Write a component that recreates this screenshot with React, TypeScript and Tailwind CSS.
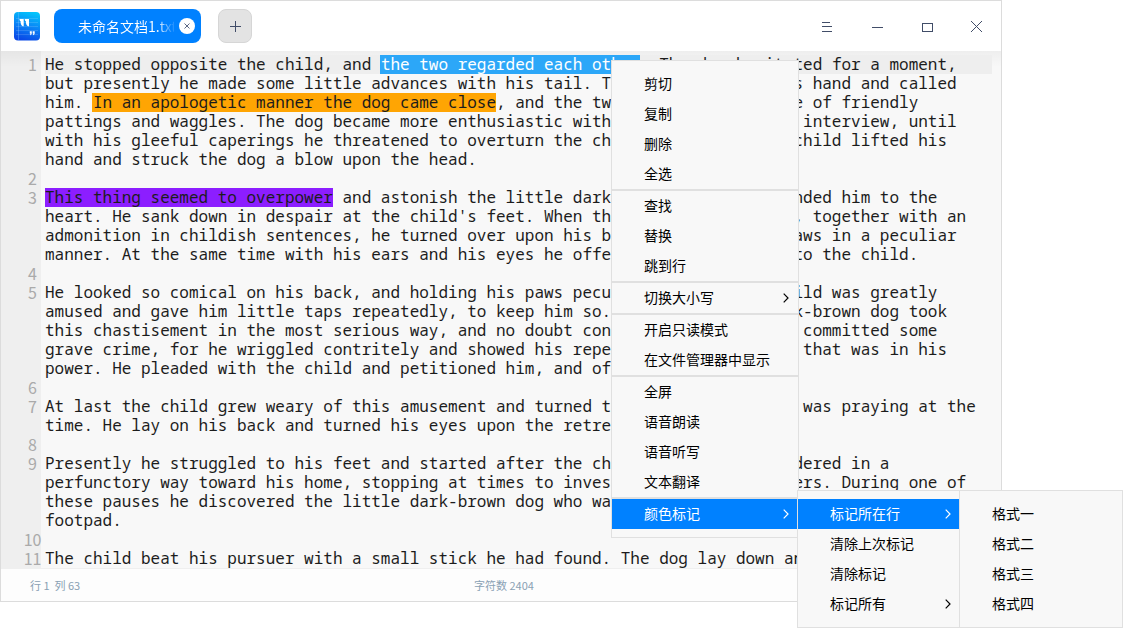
import React from "react";

type Mark = "selection" | "orange" | "purple";
type Segment = { text: string; mark?: Mark };
type Line = { no?: number; active?: boolean; segments: Segment[] };

const markClass: Record<Mark, string> = {
  selection: "-ml-px pl-px bg-[#2ca7f8] text-white",
  orange: "-ml-px pl-px bg-[#ffa503]",
  purple: "bg-[#8c1eff]",
};

const t = (text: string, no?: number): Line => ({ no, segments: [{ text }] });

const lines: Line[] = [
  {
    no: 1,
    active: true,
    segments: [
      { text: "He stopped opposite the child, and " },
      { text: "the two regarded each other", mark: "selection" },
      { text: ". The dog hesitated for a moment," },
    ],
  },
  t("but presently he made some little advances with his tail. The child put out his hand and called"),
  {
    segments: [
      { text: "him. " },
      { text: "In an apologetic manner the dog came close", mark: "orange" },
      { text: ", and the two had an interchange of friendly" },
    ],
  },
  t("pattings and waggles. The dog became more enthusiastic with each moment of the interview, until"),
  t("with his gleeful caperings he threatened to overturn the child. Whereupon the child lifted his"),
  t("hand and struck the dog a blow upon the head."),
  t("", 2),
  {
    no: 3,
    segments: [
      { text: "This thing seemed to overpower", mark: "purple" },
      { text: " and astonish the little dark-brown dog, and wounded him to the" },
    ],
  },
  t("heart. He sank down in despair at the child's feet. When the blow was repeated, together with an"),
  t("admonition in childish sentences, he turned over upon his back, and held his paws in a peculiar"),
  t("manner. At the same time with his ears and his eyes he offered a small prayer to the child."),
  t("", 4),
  t("He looked so comical on his back, and holding his paws peculiarly, that the child was greatly", 5),
  t("amused and gave him little taps repeatedly, to keep him so. But the little dark-brown dog took"),
  t("this chastisement in the most serious way, and no doubt considered that he had committed some"),
  t("grave crime, for he wriggled contritely and showed his repentance in every way that was in his"),
  t("power. He pleaded with the child and petitioned him, and offered more prayers."),
  t("", 6),
  t("At last the child grew weary of this amusement and turned toward home. The dog was praying at the", 7),
  t("time. He lay on his back and turned his eyes upon the retreating form."),
  t("", 8),
  t("Presently he struggled to his feet and started after the child. The latter wandered in a", 9),
  t("perfunctory way toward his home, stopping at times to investigate various matters. During one of"),
  t("these pauses he discovered the little dark-brown dog who was following him with the air of a"),
  t("footpad."),
  t("", 10),
  t("The child beat his pursuer with a small stick he had found. The dog lay down and prayed", 11),
];

function AppLogo() {
  return (
    <svg width="26" height="29" viewBox="0 0 26 29">
      <defs>
        <linearGradient id="logo" x1="0.65" y1="0" x2="0.4" y2="1">
          <stop offset="0" stopColor="#04c4fb" />
          <stop offset="0.5" stopColor="#0a84f6" />
          <stop offset="1" stopColor="#0a48e6" />
        </linearGradient>
      </defs>
      <rect width="26" height="28.500" rx="4" fill="url(#logo)" />
      <path d="M4.500 0V28.500" stroke="#7fc4ff" strokeOpacity="0.35" />
      <path d="M2 6.500H24M2 10.500H24M2 14.500H24M2 18.500H24M2 22.500H24" stroke="#fff" strokeOpacity="0.14" />
      <path d="M5.500 7h4.200v7.300C7 14.100 6.600 11.500 6.600 9.200C5.900 9 5.500 8.200 5.500 7zM10.700 7h4.300v7.300C12.300 14.100 11.900 11.500 11.900 9.200C11.200 9 10.700 8.200 10.700 7z" fill="#fff" />
      <path d="M15.800 19.300h2v1.700c0 1.200-.6 1.900-1.800 2.200l.5-1.700h-.7zM18.700 19.300h2v1.700c0 1.200-.6 1.900-1.800 2.200l.5-1.700h-.7z" fill="#fff" />
    </svg>
  );
}

function TitleBar() {
  return (
    <header className="flex h-[50px] shrink-0 items-start bg-white">
      <div className="ml-[13px] mt-[11px]">
        <AppLogo />
      </div>
      <div className="ml-[14px] mt-2 flex h-[34px] w-[147px] items-center rounded-lg bg-[#0081ff] pl-[24px]">
        <span className="w-[96px] shrink-0 overflow-hidden whitespace-nowrap bg-linear-to-r from-white from-82% to-white/15 to-98% bg-clip-text text-[14px] leading-5 text-transparent">
          未命名文档1.txt
        </span>
        <button className="ml-[5px] flex size-4 shrink-0 items-center justify-center rounded-full bg-white">
          <svg width="6" height="6" viewBox="0 0 6 6" stroke="#4a5675" strokeWidth="0.9">
            <path d="M.5.5l5 5M5.500.5l-5 5" />
          </svg>
        </button>
      </div>
      <button className="ml-[17px] mt-2 flex size-[34px] items-center justify-center rounded-lg border border-[#d6d6d6] bg-[#e3e3e3]">
        <svg width="11" height="11" viewBox="0 0 11 11" stroke="#414d68" shapeRendering="crispEdges">
          <path d="M5.500 0v11M0 5.500h11" />
        </svg>
      </button>
      <div className="ml-auto mr-[18px] mt-[19px] flex gap-[38px]">
        <svg width="12" height="14" viewBox="0 0 12 14" stroke="#414d68" shapeRendering="crispEdges">
          <path d="M1 2.500h8M1 6.500h10M1 11.500h10" />
        </svg>
        <svg width="12" height="14" viewBox="0 0 12 14" stroke="#414d68" shapeRendering="crispEdges">
          <path d="M1 7.500h11" />
        </svg>
        <svg width="12" height="14" viewBox="0 0 12 14" stroke="#414d68" fill="none" shapeRendering="crispEdges">
          <path d="M1.500 3.500h10v8h-10z" />
        </svg>
        <svg width="12" height="14" viewBox="0 0 12 14" stroke="#414d68" fill="none">
          <path d="M0 1l11 11M11 1l-11 11" />
        </svg>
      </div>
    </header>
  );
}

function Editor() {
  return (
    <main className="flex h-[518px] shrink-0 flex-col overflow-hidden border-b border-[#efefef] bg-[linear-gradient(to_right,#efefef_40px,#f8f8f8_40px)]">
      <div className="-mb-4 h-4 shrink-0 bg-linear-to-b from-black/4 to-transparent" />
      <div className="pt-1 font-['Noto_Sans_Mono','DejaVu_Sans_Mono',monospace] text-[16px] leading-[19px] tracking-[-0.004px] text-[#1c1c1c]">
        {lines.map((line, i) => (
          <div key={i} className="flex h-[19px]">
            <span className="flex w-10 shrink-0 justify-center pl-[23px] font-['Noto_Sans_CJK_SC',sans-serif] text-[#aaaaaa]">
              {line.no}
            </span>
            <span className={line.active ? "ml-1 w-[947px] shrink-0 whitespace-pre bg-[#eeeeee]" : "ml-1 shrink-0 whitespace-pre"}>
              {line.segments.map((s, j) => (
                <span key={j} className={s.mark ? `inline-block h-[19px] ${markClass[s.mark]}` : ""}>
                  {s.text}
                </span>
              ))}
            </span>
          </div>
        ))}
      </div>
    </main>
  );
}

function Chevron() {
  return (
    <svg width="6" height="10" viewBox="0 0 6 10" fill="none" stroke="currentColor" strokeWidth="1.2">
      <path d="M.7.7L5 5L.7 9.300" />
    </svg>
  );
}

type Item = { label: string; sub?: boolean; on?: boolean };

function MenuItem({ label, sub, on }: Item) {
  return (
    <div className={`flex h-[30px] items-center justify-between pl-8 ${on ? "bg-[#0081ff] text-white" : "text-black"}`}>
      <span className="pb-0.5">{label}</span>
      {sub && (
        <span className="mr-2 in-data-[level=main]:mr-[9px]">
          <Chevron />
        </span>
      )}
    </div>
  );
}

const groups: Item[][] = [
  [{ label: "剪切" }, { label: "复制" }, { label: "删除" }, { label: "全选" }],
  [{ label: "查找" }, { label: "替换" }, { label: "跳到行" }],
  [{ label: "切换大小写", sub: true }],
  [{ label: "开启只读模式" }, { label: "在文件管理器中显示" }],
  [{ label: "全屏" }, { label: "语音朗读" }, { label: "语音听写" }, { label: "文本翻译" }],
  [{ label: "颜色标记", sub: true, on: true }],
];

const markMenu: Item[] = [
  { label: "标记所在行", sub: true, on: true },
  { label: "清除上次标记" },
  { label: "清除标记" },
  { label: "标记所有", sub: true },
];

const formatMenu: Item[] = [{ label: "格式一" }, { label: "格式二" }, { label: "格式三" }, { label: "格式四" }];

export default function App() {
  return (
    <div className="relative h-[628px] w-[1123px] overflow-hidden bg-white font-['Noto_Sans_CJK_SC',sans-serif] text-[14px]">
      <div className="flex h-[602px] w-[1002px] flex-col overflow-hidden border border-[#dcdcdc]">
        <TitleBar />
        <Editor />
        <footer className="flex flex-1 items-center bg-[#fdfdfd] pl-[29px] text-[11px] text-[#8aa1b4]">
          <span className="w-[444px] whitespace-pre">行 1  列 63</span>
          <span>字符数 2404</span>
        </footer>
      </div>

      <div data-level="main" className="absolute left-[611px] top-[60px] h-[478px] w-[188px] border border-[#e0e0e0] bg-[#f8f8f8] pt-2">
        {groups.map((g, i) => (
          <div key={i} className={i ? "border-t-2 border-[#e0e0e0]" : ""}>
            {g.map((item) => (
              <MenuItem key={item.label} {...item} />
            ))}
          </div>
        ))}
      </div>

      <div className="absolute left-[797px] top-[490px] h-[138px] w-[163px] border border-[#e0e0e0] bg-[#f8f8f8] pt-2">
        {markMenu.map((item) => (
          <MenuItem key={item.label} {...item} />
        ))}
      </div>

      <div className="absolute left-[959px] top-[490px] h-[138px] w-[164px] border border-[#e0e0e0] bg-[#f8f8f8] pt-2">
        {formatMenu.map((item) => (
          <MenuItem key={item.label} {...item} />
        ))}
      </div>
    </div>
  );
}
